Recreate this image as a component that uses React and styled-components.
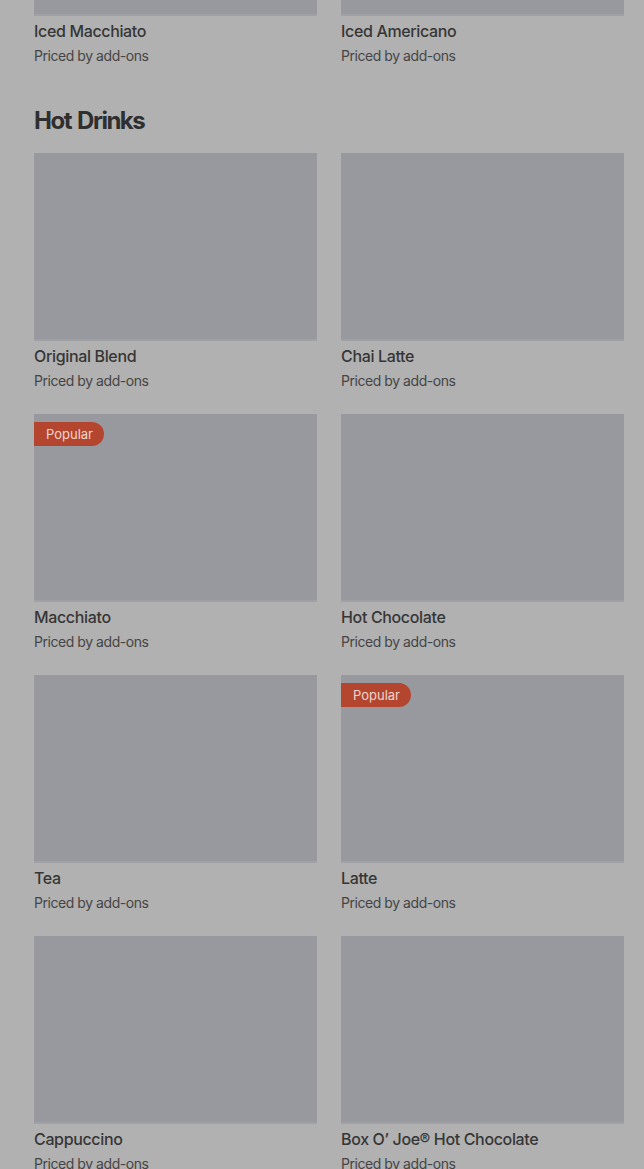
import React from 'react'
import styled, { createGlobalStyle } from 'styled-components'

const Global = createGlobalStyle`
  html, body {
    margin: 0;
    padding: 0;
    background: #b1b1b1;
    overflow: hidden;
  }
  body {
    font-family: Inter, "Noto Sans", "Liberation Sans", sans-serif;
    color: #333333;
  }
`

const Page = styled.div`
  width: 644px;
  height: 1169px;
  overflow: hidden;
  box-sizing: border-box;
  padding: 0 20px 0 34px;
`

const Scroller = styled.div`
  margin-top: -172px;
`

const Grid = styled.div`
  display: grid;
  grid-template-columns: 1fr 1fr;
  column-gap: 24px;
  row-gap: 23px;
`

const Heading = styled.h2`
  margin: 39px 0 16px;
  font-size: 24px;
  line-height: 32px;
  font-weight: 700;
  letter-spacing: -1.5px;
  word-spacing: 2px;
  color: #2f2f2f;
`

const Card = styled.div`
  display: flex;
  flex-direction: column;
  min-width: 0;
`

const Thumb = styled.div`
  position: relative;
  height: 188px;
  background: #97999e;
  box-shadow: inset 0 -2px 0 #9fa1a5;
`

const Badge = styled.span`
  position: absolute;
  top: 8px;
  left: 0;
  height: 24px;
  padding: 0 11px 0 12px;
  display: flex;
  align-items: center;
  border-radius: 0 12px 12px 0;
  background: #b4462f;
  color: #efd6cf;
  font-size: 13px;
  font-weight: 400;
  letter-spacing: 0;
`

const Title = styled.div`
  margin-top: 5px;
  font-size: 16px;
  line-height: 20px;
  font-weight: 500;
  letter-spacing: -0.35px;
  color: #363636;
  white-space: nowrap;
`

const Sub = styled.div`
  margin-top: 5px;
  font-size: 14px;
  line-height: 20px;
  color: #454545;
  letter-spacing: -0.45px;
`

const Item = ({ name, popular }) => (
  <Card>
    <Thumb>{popular && <Badge>Popular</Badge>}</Thumb>
    <Title>{name}</Title>
    <Sub>Priced by add-ons</Sub>
  </Card>
)

const iced = [{ name: 'Iced Macchiato' }, { name: 'Iced Americano' }]

const hot = [
  { name: 'Original Blend' },
  { name: 'Chai Latte' },
  { name: 'Macchiato', popular: true },
  { name: 'Hot Chocolate' },
  { name: 'Tea' },
  { name: 'Latte', popular: true },
  { name: 'Cappuccino' },
  { name: 'Box O\u2019 Joe\u00ae Hot Chocolate' },
]

export default function App() {
  return (
    <Page>
      <Global />
      <Scroller>
        <Grid>
          {iced.map((d) => (
            <Item key={d.name} {...d} />
          ))}
        </Grid>
        <Heading>Hot Drinks</Heading>
        <Grid>
          {hot.map((d) => (
            <Item key={d.name} {...d} />
          ))}
        </Grid>
      </Scroller>
    </Page>
  )
}
